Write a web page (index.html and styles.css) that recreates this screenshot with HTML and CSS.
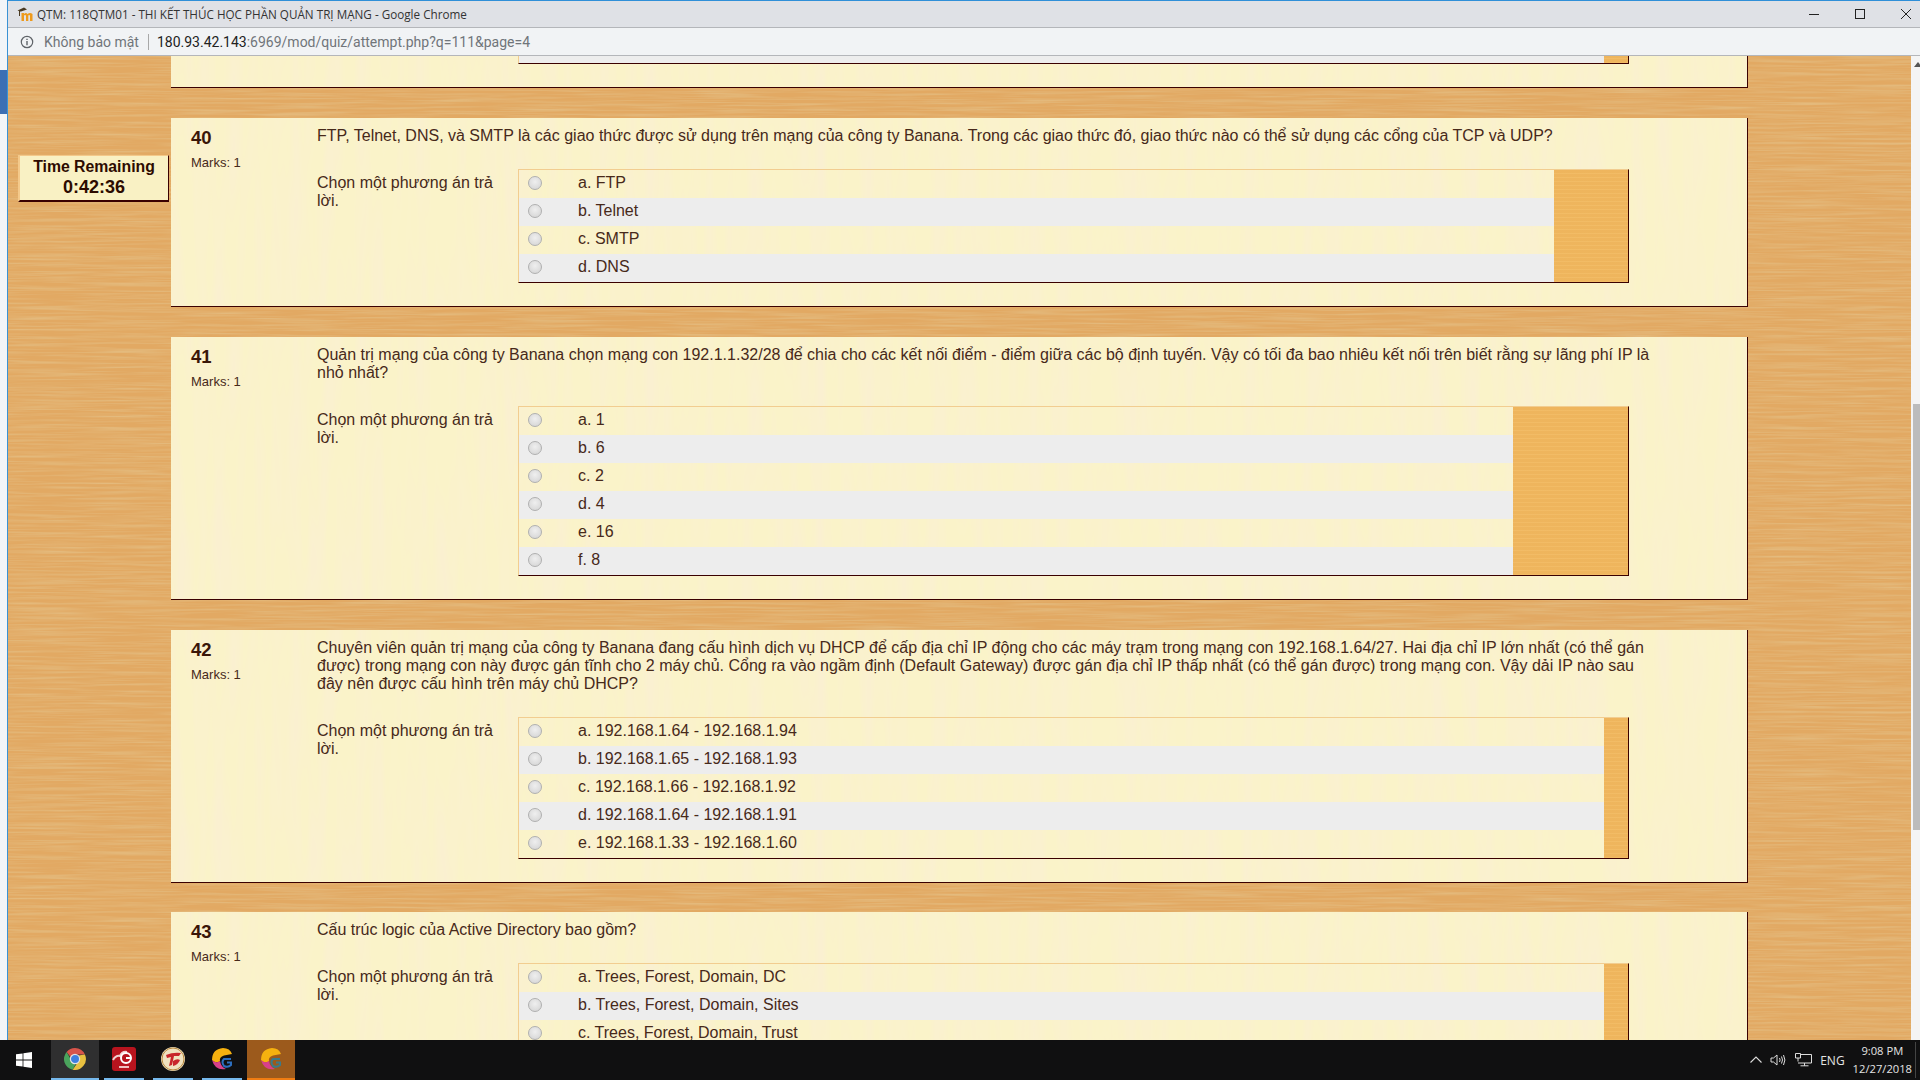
FILE: index.html
```html
<!DOCTYPE html>
<html>
<head>
  <meta charset="utf-8">
  <title>QTM: 118QTM01 - THI KẾT THÚC HỌC PHẦN QUẢN TRỊ MẠNG</title>
  <link rel="stylesheet" href="styles.css">
</head>
<body>
<div class="screen">
  <!-- Desktop showing behind the window -->
  <div class="desktop-edge"><div class="desktop-blue"></div></div>

  <div class="window">
    <div class="title-bar">
      <svg class="favicon" width="16" height="16" viewBox="0 0 16 16">
        <path d="M0.500 4.500 L7 1.500 L10 3.500 L4 5.500 L3 5.500 L3 10 L2 10 L2 5 Z" fill="#4a3a22"/>
        <path d="M4.500 15 V7 H7 V8 Q9 6 10.500 8 Q13 6 15.500 8 V15 H13 V9.500 Q12 8.500 11.300 9.500 V15 H9 V9.500 Q8 8.500 7 9.500 V15 Z" fill="#ee9a1c"/>
      </svg>
      <span class="title-text">QTM: 118QTM01 - THI KẾT THÚC HỌC PHẦN QUẢN TRỊ MẠNG - Google Chrome</span>
      <div class="window-buttons">
        <svg width="12" height="12" viewBox="0 0 12 12"><path d="M1 6.500 H11" stroke="#222" fill="none"/></svg>
        <svg width="12" height="12" viewBox="0 0 12 12"><rect x="1.500" y="1.500" width="9" height="9" stroke="#222" fill="none"/></svg>
        <svg width="12" height="12" viewBox="0 0 12 12"><path d="M1 1 L11 11 M11 1 L1 11" stroke="#222" fill="none"/></svg>
      </div>
    </div>

    <div class="address-bar">
      <svg class="info-icon" width="14" height="14" viewBox="0 0 14 14">
        <circle cx="7" cy="7" r="5.700" stroke="#5f6368" stroke-width="1.200" fill="none"/>
        <path d="M7 6 V10.200 M7 3.800 V5" stroke="#5f6368" stroke-width="1.400" fill="none"/>
      </svg>
      <span class="not-secure">Không bảo mật</span>
      <span class="address-sep"></span>
      <span class="url"><span class="url-host">180.93.42.143</span>:6969/mod/quiz/attempt.php?q=111&amp;page=4</span>
    </div>

    <div class="content">
      <div class="page">
        <svg class="wood-grain" width="100%" height="100%">
          <filter id="wood" x="0" y="0" width="100%" height="100%">
            <feTurbulence type="fractalNoise" baseFrequency="0.012 0.45" numOctaves="3" seed="7"/>
            <feColorMatrix type="matrix" values="0 0 0 0 0.78  0 0 0 0 0.53  0 0 0 0 0.24  1.600 0 0 0 -0.620"/>
          </filter>
          <filter id="paper" x="0" y="0" width="100%" height="100%">
            <feTurbulence type="fractalNoise" baseFrequency="0.07 0.006" numOctaves="2" seed="3"/>
            <feColorMatrix type="matrix" values="0 0 0 0 0.96  0 0 0 0 0.87  0 0 0 0 0.64  2.200 0 0 0 -0.850"/>
          </filter>
          <rect width="100%" height="100%" filter="url(#wood)"/>
        </svg>

        <div class="timer">
          <div class="timer-label">Time Remaining</div>
          <div class="timer-value">0:42:36</div>
        </div>

        <!-- Question 39, scrolled mostly out of view -->
        <div class="question question-cut">
          <svg class="paper-grain" width="100%" height="100%"><rect width="100%" height="100%" filter="url(#paper)"/></svg>
          <div class="q-body">
            <div class="answers answers-cut">
              <div class="answer-list"><div class="answer-stub"></div></div>
              <div class="strip strip-narrow"></div>
            </div>
          </div>
        </div>

        <div class="question">
          <svg class="paper-grain" width="100%" height="100%"><rect width="100%" height="100%" filter="url(#paper)"/></svg>
          <div class="q-info">
            <div class="q-number">40</div>
            <div class="q-marks">Marks: 1</div>
          </div>
          <div class="q-body">
            <div class="q-text">FTP, Telnet, DNS, và SMTP là các giao thức được sử dụng trên mạng của công ty Banana. Trong các giao thức đó, giao thức nào có thể sử dụng các cổng của TCP và UDP?</div>
            <div class="q-ablock">
              <div class="prompt">Chọn một phương án trả lời.</div>
              <div class="answers">
                <div class="answer-list">
                  <label class="answer"><input type="radio" name="q40"><span>a. FTP</span></label>
                  <label class="answer"><input type="radio" name="q40"><span>b. Telnet</span></label>
                  <label class="answer"><input type="radio" name="q40"><span>c. SMTP</span></label>
                  <label class="answer"><input type="radio" name="q40"><span>d. DNS</span></label>
                </div>
                <div class="strip strip-wide"></div>
              </div>
            </div>
          </div>
        </div>

        <div class="question">
          <svg class="paper-grain" width="100%" height="100%"><rect width="100%" height="100%" filter="url(#paper)"/></svg>
          <div class="q-info">
            <div class="q-number">41</div>
            <div class="q-marks">Marks: 1</div>
          </div>
          <div class="q-body">
            <div class="q-text">Quản trị mạng của công ty Banana chọn mạng con 192.1.1.32/28 để chia cho các kết nối điểm - điểm giữa các bộ định tuyến. Vậy có tối đa bao nhiêu kết nối trên biết rằng sự lãng phí IP là nhỏ nhất?</div>
            <div class="q-ablock">
              <div class="prompt">Chọn một phương án trả lời.</div>
              <div class="answers">
                <div class="answer-list">
                  <label class="answer"><input type="radio" name="q41"><span>a. 1</span></label>
                  <label class="answer"><input type="radio" name="q41"><span>b. 6</span></label>
                  <label class="answer"><input type="radio" name="q41"><span>c. 2</span></label>
                  <label class="answer"><input type="radio" name="q41"><span>d. 4</span></label>
                  <label class="answer"><input type="radio" name="q41"><span>e. 16</span></label>
                  <label class="answer"><input type="radio" name="q41"><span>f. 8</span></label>
                </div>
                <div class="strip strip-widest"></div>
              </div>
            </div>
          </div>
        </div>

        <div class="question">
          <svg class="paper-grain" width="100%" height="100%"><rect width="100%" height="100%" filter="url(#paper)"/></svg>
          <div class="q-info">
            <div class="q-number">42</div>
            <div class="q-marks">Marks: 1</div>
          </div>
          <div class="q-body">
            <div class="q-text">Chuyên viên quản trị mạng của công ty Banana đang cấu hình dịch vụ DHCP để cấp địa chỉ IP động cho các máy trạm trong mạng con 192.168.1.64/27. Hai địa chỉ IP lớn nhất (có thể gán được) trong mạng con này được gán tĩnh cho 2 máy chủ. Cổng ra vào ngầm định (Default Gateway) được gán địa chỉ IP thấp nhất (có thể gán được) trong mạng con. Vậy dải IP nào sau đây nên được cấu hình trên máy chủ DHCP?</div>
            <div class="q-ablock">
              <div class="prompt">Chọn một phương án trả lời.</div>
              <div class="answers">
                <div class="answer-list">
                  <label class="answer"><input type="radio" name="q42"><span>a. 192.168.1.64 - 192.168.1.94</span></label>
                  <label class="answer"><input type="radio" name="q42"><span>b. 192.168.1.65 - 192.168.1.93</span></label>
                  <label class="answer"><input type="radio" name="q42"><span>c. 192.168.1.66 - 192.168.1.92</span></label>
                  <label class="answer"><input type="radio" name="q42"><span>d. 192.168.1.64 - 192.168.1.91</span></label>
                  <label class="answer"><input type="radio" name="q42"><span>e. 192.168.1.33 - 192.168.1.60</span></label>
                </div>
                <div class="strip strip-narrow"></div>
              </div>
            </div>
          </div>
        </div>

        <div class="question">
          <svg class="paper-grain" width="100%" height="100%"><rect width="100%" height="100%" filter="url(#paper)"/></svg>
          <div class="q-info">
            <div class="q-number">43</div>
            <div class="q-marks">Marks: 1</div>
          </div>
          <div class="q-body">
            <div class="q-text">Cấu trúc logic của Active Directory bao gồm?</div>
            <div class="q-ablock">
              <div class="prompt">Chọn một phương án trả lời.</div>
              <div class="answers">
                <div class="answer-list">
                  <label class="answer"><input type="radio" name="q43"><span>a. Trees, Forest, Domain, DC</span></label>
                  <label class="answer"><input type="radio" name="q43"><span>b. Trees, Forest, Domain, Sites</span></label>
                  <label class="answer"><input type="radio" name="q43"><span>c. Trees, Forest, Domain, Trust</span></label>
                </div>
                <div class="strip strip-narrow"></div>
              </div>
            </div>
          </div>
        </div>
      </div>

      <div class="scrollbar">
        <div class="scroll-arrow"></div>
        <div class="scroll-thumb"></div>
      </div>
    </div>
  </div>

  <!-- Windows taskbar -->
  <div class="taskbar">
    <div class="start">
      <svg width="16" height="16" viewBox="0 0 16 16">
        <path d="M0 2.300 L6.600 1.400 V7.500 H0 Z M7.400 1.300 L16 0 V7.500 H7.400 Z M0 8.400 H6.600 V14.600 L0 13.700 Z M7.400 8.400 H16 V16 L7.400 14.800 Z" fill="#fff"/>
      </svg>
    </div>

    <div class="task task-open task-focus">
      <svg width="24" height="24" viewBox="0 0 24 24">
        <path d="M12 1 A11 11 0 0 1 21.900 7.500 H12 A4.600 4.600 0 0 0 7.700 10.300 L3.600 4.900 A11 11 0 0 1 12 1 Z" fill="#d8544a"/>
        <path d="M3.600 4.900 L8.600 13.800 A4.600 4.600 0 0 0 12.900 16.500 L9.700 22.800 A11 11 0 0 1 3.600 4.900 Z" fill="#4aa35c"/>
        <path d="M21.900 7.500 A11 11 0 0 1 9.700 22.800 L14.600 15.600 A4.600 4.600 0 0 0 15.300 8.600 Z" fill="#e8c040"/>
        <circle cx="12" cy="12" r="4.600" fill="#3f7fe0" stroke="#e4e4e4" stroke-width="1.200"/>
      </svg>
    </div>
    <div class="task task-open task-gap">
      <svg width="24" height="24" viewBox="0 0 24 24">
        <rect width="24" height="24" rx="3" fill="#b8141e"/>
        <path d="M1 13 Q4 8 8 9 Q10 4 15 5" stroke="#f0d0d0" stroke-width="2" fill="none"/>
        <circle cx="14" cy="11" r="5" fill="none" stroke="#fff" stroke-width="2"/>
        <path d="M14 11 H19" stroke="#fff" stroke-width="2"/>
        <path d="M7 20 H17" stroke="#f0c0c0" stroke-width="2"/>
      </svg>
    </div>
    <div class="task task-open task-gap">
      <svg width="24" height="24" viewBox="0 0 24 24">
        <circle cx="12" cy="12" r="12" fill="#f0e2c0"/>
        <circle cx="12" cy="12" r="11" fill="none" stroke="#b8873c" stroke-width="1"/>
        <path d="M5 8 Q12 5 20 6 L18 9 L13 9 L11 18 L8 19 L10 10 L6 11 Z" fill="#c8252a"/>
        <path d="M12 14 Q16 11 19 13 Q17 18 12 19 Z" fill="#c8252a"/>
      </svg>
    </div>
    <div class="task task-open task-gap">
      <svg width="24" height="24" viewBox="0 0 24 24">
        <path d="M2 13 Q2 2 13 1 Q20 1 22 7 L14 8.500 Q9 10 10 14 Q6 17 2 13 Z" fill="#f6b10f"/>
        <path d="M2 13 Q6 17 10 14 Q11 20 16 22 Q5 24 2 13 Z" fill="#d8408a"/>
        <path d="M21 12 H14 Q11 15 14 19 Q18 21 21 18 V15.500 H17" stroke="#2c6fc0" stroke-width="2" fill="none"/>
      </svg>
    </div>
    <div class="task task-active">
      <svg width="24" height="24" viewBox="0 0 24 24">
        <path d="M2 13 Q2 2 13 1 Q20 1 22 7 L14 8.500 Q9 10 10 14 Q6 17 2 13 Z" fill="#f6b10f"/>
        <path d="M2 13 Q6 17 10 14 Q11 20 16 22 Q5 24 2 13 Z" fill="#d8408a"/>
        <path d="M21 12 H14 Q11 15 14 19 Q18 21 21 18 V15.500 H17" stroke="#3b7a8a" stroke-width="2" fill="none"/>
      </svg>
    </div>

    <div class="tray">
      <svg width="12" height="12" viewBox="0 0 12 12"><path d="M0.500 8.500 L6 3 L11.500 8.500" stroke="#ddd" fill="none" stroke-width="1.100"/></svg>
      <svg width="17" height="14" viewBox="0 0 17 14">
        <path d="M1 5 H3.500 L7 2 V12 L3.500 9 H1 Z" stroke="#ddd" fill="none"/>
        <path d="M9.500 5 Q10.800 7 9.500 9 M11.500 3.500 Q13.500 7 11.500 10.500 M13.500 2 Q16.300 7 13.500 12" stroke="#ddd" fill="none"/>
      </svg>
      <svg width="17" height="14" viewBox="0 0 17 14">
        <path d="M5.500 1.500 H16.500 V10 H3 M9.500 10 V12.800 M5.500 12.800 H13.500 M0.500 0.500 H5.500 V5 H0.500 Z M3 5 V8.500" stroke="#ddd" fill="none"/>
      </svg>
      <span class="lang">ENG</span>
      <div class="clock">
        <div>9:08 PM</div>
        <div>12/27/2018</div>
      </div>
    </div>
  </div>
</div>
</body>
</html>
```

FILE: styles.css
```css
/* Screen layout */
html, body {
  margin: 0;
  height: 100%;
  overflow: hidden;
}

.screen {
  display: grid;
  grid-template-columns: 7px 1fr;
  grid-template-rows: 1040px 40px;
  width: 1920px;
  height: 1080px;
}

.desktop-edge {
  background-color: #f2f5f8;
  padding-top: 70px;
}

.desktop-blue {
  height: 44px;
  background-color: #3c6fb4;
}

/* Chrome window */
.window {
  display: flex;
  flex-direction: column;
  min-width: 0;
  border-left: 1px solid #3a92d4;
  border-top: 1px solid #2f8fd8;
  font-family: "Open Sans", "Noto Sans", sans-serif;
}

.title-bar {
  display: flex;
  align-items: center;
  flex: none;
  height: 27px;
  padding-left: 9px;
  background-color: #dfe1e6;
  border-bottom: 1px solid #b4b6ba;
  box-sizing: border-box;
}

.favicon {
  margin-right: 4px;
}

.title-text {
  font-size: 11.700px;
  color: #333;
}

.window-buttons {
  display: flex;
  gap: 34px;
  margin-left: auto;
  margin-right: 8px;
}

.address-bar {
  display: flex;
  align-items: center;
  flex: none;
  height: 28px;
  padding-left: 12px;
  background-color: #f1f3f5;
  border-bottom: 1px solid #b4b6ba;
  box-sizing: border-box;
  font-family: "Roboto", "Noto Sans", sans-serif;
  font-size: 14px;
  color: #70757a;
}

.not-secure {
  margin-left: 10px;
}

.address-sep {
  width: 1px;
  height: 16px;
  margin: 0 8px 0 9px;
  background-color: #a8a8a8;
}

.url-host {
  color: #222;
}

/* Page with the wooden background */
.content {
  display: flex;
  flex: 1;
  min-height: 0;
}

.page {
  position: relative;
  flex: 1;
  overflow: hidden;
  padding-left: 163px;
  background-color: #e2a963;
  font-family: "Liberation Sans", Arial, sans-serif;
  color: #47291a;
}

.wood-grain {
  position: absolute;
  top: 0;
  left: 0;
}

.scrollbar {
  position: relative;
  flex: none;
  width: 9px;
  background-color: #f4f4f4;
}

.scroll-arrow {
  position: absolute;
  top: 6px;
  left: 3px;
  border-left: 4px solid transparent;
  border-right: 4px solid transparent;
  border-bottom: 5px solid #555;
}

.scroll-thumb {
  position: absolute;
  top: 348px;
  left: 2px;
  right: 0;
  height: 426px;
  background-color: #bcbcbc;
}

/* Timer block */
.timer {
  position: absolute;
  top: 99px;
  left: 10px;
  width: 148px;
  height: 44px;
  z-index: 2;
  background-color: #f9f1c4;
  border-top: 1px solid #f4c98a;
  border-left: 2px solid #f4c98a;
  border-bottom: 2px solid #3a0000;
  border-right: 1px solid #3a0000;
  text-align: center;
  font-weight: bold;
  color: #2d0b00;
}

.timer-label {
  margin-top: 1px;
  font-size: 15.800px;
  line-height: 20px;
}

.timer-value {
  font-size: 18px;
  line-height: 21px;
}

/* Question cards */
.question {
  position: relative;
  display: flex;
  width: 1577px;
  margin-bottom: 30px;
  padding: 9px 0 23px 20px;
  box-sizing: border-box;
  background-color: #faf3c9;
  border-right: 1px solid #3a0000;
  border-bottom: 1px solid #3a0000;
}

.question:last-child {
  margin-top: -1px;
}

.paper-grain {
  position: absolute;
  top: 0;
  left: 0;
}

.question-cut {
  height: 32px;
  padding: 0 0 23px 347px;
}

.q-info {
  position: relative;
  flex: none;
  width: 126px;
}

.q-number {
  font-size: 18.500px;
  font-weight: bold;
  line-height: 21px;
  color: #3a1608;
}

.q-marks {
  margin-top: 8px;
  font-size: 13px;
  line-height: 14px;
}

.q-body {
  position: relative;
  flex: 1;
  min-width: 0;
}

.q-text {
  width: 1340px;
  margin-bottom: 24px;
  font-size: 16px;
  line-height: 18px;
}

.q-ablock {
  display: flex;
}

.prompt {
  flex: none;
  width: 190px;
  margin-right: 11px;
  margin-top: 5px;
  font-size: 16px;
  line-height: 18px;
}

/* Answer box: rows on the left, an orange strip on the right */
.answers {
  display: flex;
  flex: none;
  width: 1111px;
  box-sizing: border-box;
  border-top: 1px solid #f2cd90;
  border-left: 1px solid #f2cd90;
  border-bottom: 1px solid #3a0000;
  border-right: 1px solid #3a0000;
}

.answer-list {
  flex: 1;
  min-width: 0;
}

.strip {
  flex: none;
  background-color: #f0b75f;
  background-image: repeating-linear-gradient(0deg, rgba(255, 215, 140, 0.14) 0 1px, rgba(215, 150, 60, 0.06) 1px 4px);
}

.strip-narrow { width: 24px; }
.strip-wide { width: 74px; }
.strip-widest { width: 115px; }

.answers-cut {
  height: 8px;
  border-top: 0;
}

.answer-stub {
  height: 7px;
  background-color: #ededed;
}

.answer {
  display: flex;
  align-items: center;
  height: 28px;
  padding: 0 0 3px 9px;
  box-sizing: border-box;
  font-size: 16px;
}

.answer:nth-child(even) {
  background-color: #ededed;
}

.answer input {
  appearance: none;
  flex: none;
  width: 14px;
  height: 14px;
  margin: 0 36px 0 0;
  border: 1px solid #b0b0b0;
  border-radius: 50%;
  background: radial-gradient(circle at 50% 40%, #efefef, #d2d2d2);
}

/* Taskbar */
.taskbar {
  grid-column: 1 / 3;
  display: flex;
  align-items: stretch;
  background-color: #101011;
  color: #e4e4e4;
  font-family: "Open Sans", "Noto Sans", sans-serif;
}

.start {
  display: flex;
  align-items: center;
  justify-content: center;
  flex: none;
  width: 48px;
  margin-right: 3px;
}

.task {
  display: flex;
  align-items: center;
  justify-content: center;
  flex: none;
  width: 48px;
  box-sizing: border-box;
  border-bottom: 2px solid transparent;
}

.task-open {
  border-image: linear-gradient(90deg, transparent 4px, #76b9ed 4px, #76b9ed 44px, transparent 44px) 1;
  border-image-slice: 0 0 2 0;
}

.task-gap {
  margin-left: 1px;
}

.task-focus {
  background-color: #2f2f30;
  border-image: none;
  border-bottom-color: #76b9ed;
}

.task-active {
  margin-left: 1px;
  background-color: #9c5a1c;
  border-bottom-color: #f07c12;
}

.tray {
  display: flex;
  align-items: center;
  margin-left: auto;
  font-size: 11.200px;
}

.tray svg {
  margin-right: 8px;
}

.lang {
  margin: 0 8px 0 0;
  font-size: 12px;
}

.clock {
  padding-right: 3px;
  margin-right: 4px;
  border-right: 1px solid #444;
  text-align: center;
  line-height: 18px;
}
```
